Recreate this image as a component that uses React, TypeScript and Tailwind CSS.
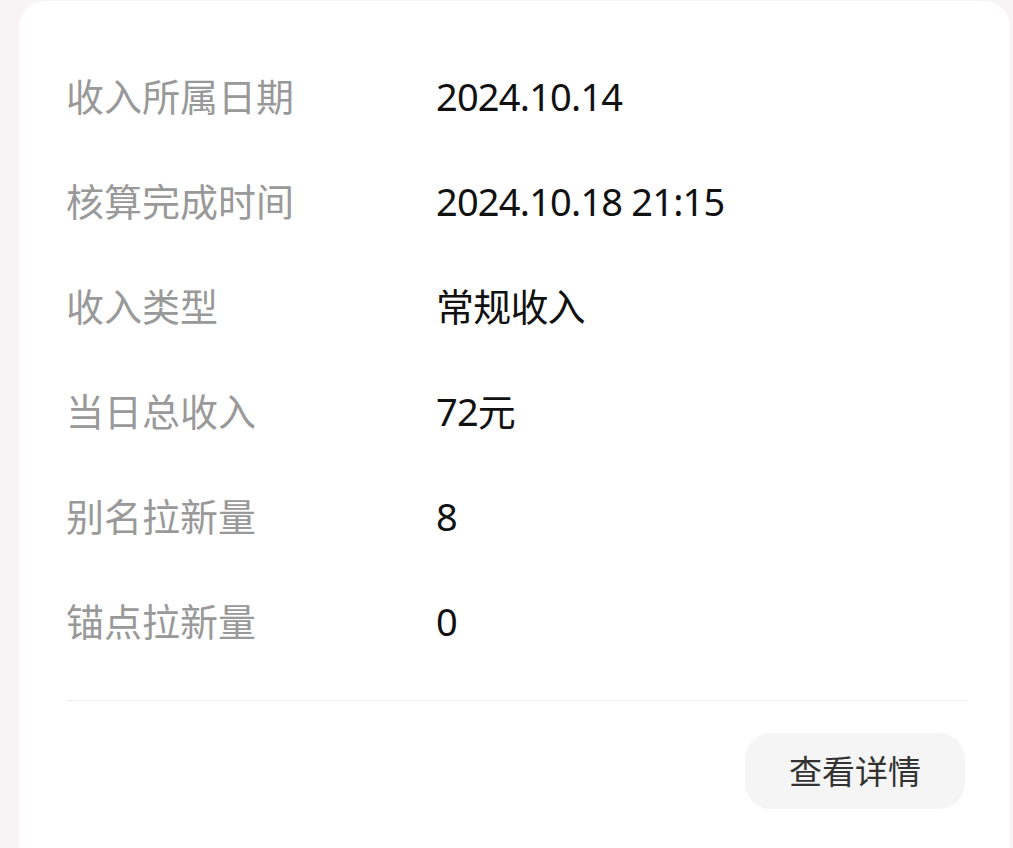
import React from "react";

const rows: [string, string][] = [
  ["收入所属日期", "2024.10.14"],
  ["核算完成时间", "2024.10.18 21:15"],
  ["收入类型", "常规收入"],
  ["当日总收入", "72元"],
  ["别名拉新量", "8"],
  ["锚点拉新量", "0"],
];

export default function App() {
  return (
    <div
      className="w-[1013px] h-[848px] overflow-hidden bg-[#f8f4f6] pl-[19px] pt-[1px]"
      style={{ fontFamily: '"Noto Sans", "Noto Sans CJK SC", sans-serif' }}
    >
      <div className="w-[991px] h-[900px] bg-white rounded-[26px] pl-[47px] pr-[43px] pt-[42px]">
        <div className="flex flex-col">
          {rows.map(([k, v]) => (
            <div key={k} className="h-[105px] flex items-center">
              <div className="w-[370px] text-[38px] leading-none text-[#999999]">{k}</div>
              <div className="text-[38px] leading-none text-[#111111] tracking-[-0.8px]">{v}</div>
            </div>
          ))}
        </div>
        <div className="mt-[27px] h-px bg-[#ececec]" />
        <div className="flex justify-end mt-[32px] pr-[2px]">
          <button className="w-[220px] h-[76px] rounded-[26px] bg-[#f5f5f5] text-[33px] text-[#333333] flex items-center justify-center leading-none">
            查看详情
          </button>
        </div>
      </div>
    </div>
  );
}
